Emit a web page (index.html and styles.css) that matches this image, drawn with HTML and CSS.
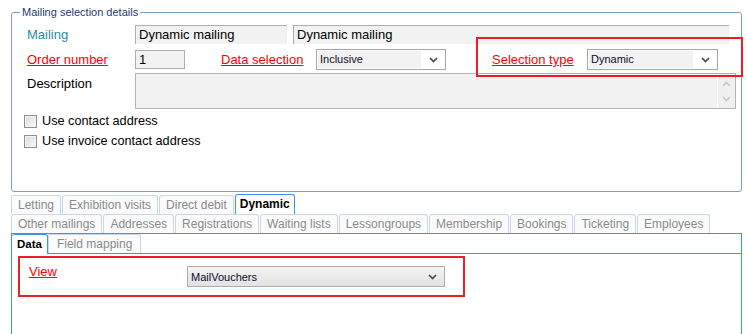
FILE: index.html
```html
<!DOCTYPE html>
<html lang="en">
<head>
    <meta charset="UTF-8">
    <meta name="viewport" content="width=device-width, initial-scale=1.0">
    <title>Mailing selection</title>
    <link rel="stylesheet" href="styles.css">
</head>
<body>
    <div class="page">
        <fieldset class="groupbox">
            <legend>Mailing selection details</legend>
            <div class="row row-mailing">
                <span class="label teal">Mailing</span>
                <div class="field field-name">Dynamic mailing</div>
                <div class="field field-title">Dynamic mailing</div>
            </div>
            <div class="row row-order">
                <a class="label link">Order number</a>
                <div class="field field-order">1</div>
                <a class="label link label-mid">Data selection</a>
                <div class="combo combo-data">
                    <span class="combo-text">Inclusive</span>
                    <svg class="chevron" width="9" height="6" viewBox="0 0 9 6"><path d="M1 1 L4.5 4.5 L8 1" fill="none" stroke="#4a4a4a" stroke-width="1.7"/></svg>
                </div>
                <a class="label link label-type">Selection type</a>
                <div class="combo combo-type">
                    <span class="combo-text">Dynamic</span>
                    <svg class="chevron" width="9" height="6" viewBox="0 0 9 6"><path d="M1 1 L4.5 4.5 L8 1" fill="none" stroke="#4a4a4a" stroke-width="1.7"/></svg>
                </div>
            </div>
            <div class="row row-desc">
                <span class="label label-top">Description</span>
                <div class="memo">
                    <div class="memo-text"></div>
                    <div class="memo-scroll">
                        <svg width="9" height="6" viewBox="0 0 9 6"><path d="M1 5 L4.5 1.5 L8 5" fill="none" stroke="#c8c8c8" stroke-width="1.6"/></svg>
                        <svg width="9" height="6" viewBox="0 0 9 6"><path d="M1 1 L4.5 4.5 L8 1" fill="none" stroke="#c8c8c8" stroke-width="1.6"/></svg>
                    </div>
                </div>
            </div>
            <div class="check-row"><span class="checkbox"></span>Use contact address</div>
            <div class="check-row"><span class="checkbox"></span>Use invoice contact address</div>
        </fieldset>

        <div class="tabs">
            <div class="tab-row">
                <span class="tab">Letting</span>
                <span class="tab">Exhibition visits</span>
                <span class="tab">Direct debit</span>
                <span class="tab active">Dynamic</span>
            </div>
            <div class="tab-row">
                <span class="tab">Other mailings</span>
                <span class="tab">Addresses</span>
                <span class="tab">Registrations</span>
                <span class="tab">Waiting lists</span>
                <span class="tab">Lessongroups</span>
                <span class="tab">Membership</span>
                <span class="tab">Bookings</span>
                <span class="tab">Ticketing</span>
                <span class="tab">Employees</span>
            </div>
            <div class="panel">
                <div class="subtabs">
                    <span class="subtab active">Data</span>
                    <span class="subtab">Field mapping</span>
                </div>
                <div class="subpanel">
                    <div class="view-box">
                        <a class="link view-label">View</a>
                        <div class="view-combo">
                            <span>MailVouchers</span>
                            <svg class="chevron" width="9" height="6" viewBox="0 0 9 6"><path d="M1 1 L4.5 4.5 L8 1" fill="none" stroke="#4a4a4a" stroke-width="1.7"/></svg>
                        </div>
                    </div>
                </div>
            </div>
        </div>

        <div class="highlight"></div>
    </div>
</body>
</html>
```

FILE: styles.css
```css
body {
    margin: 0;
    padding: 0;
    background-color: #fff;
    font-family: "Liberation Sans", Arial, sans-serif;
    font-size: 13px;
    color: #000;
}
.page {
    position: relative;
    width: 747px;
    height: 334px;
    overflow: hidden;
}
.groupbox {
    box-sizing: border-box;
    width: 731px;
    height: 187px;
    margin: 5px 0 0 11px;
    padding: 0;
    border: 1px solid #7a9cd3;
    border-radius: 3px;
}
.groupbox legend {
    margin-left: 8px;
    padding: 0 2px;
    font-size: 11px;
    line-height: 14px;
    color: #1e3a6e;
}
.row {
    display: flex;
    align-items: center;
    padding-left: 15px;
}
.row-mailing {
    margin-top: 6px;
    height: 19px;
}
.row-order {
    margin-top: 5px;
    height: 21px;
}
.row-desc {
    align-items: flex-start;
    margin-top: 3px;
}
.label {
    width: 108px;
    flex-shrink: 0;
}
.teal {
    color: #2d8ca5;
}
.link {
    color: #ff0000;
    text-decoration: underline;
    cursor: pointer;
}
.label-mid {
    width: 95px;
    margin-left: 36px;
}
.label-type {
    width: 95px;
    margin-left: 46px;
}
.label-top {
    padding-top: 3px;
}
.field {
    box-sizing: border-box;
    height: 19px;
    line-height: 18px;
    padding-left: 3px;
    background-color: #f2f2f2;
    border-top: 1px solid #adadad;
    border-left: 1px solid #adadad;
}
.field-name {
    width: 152px;
}
.field-title {
    width: 436px;
    margin-left: 6px;
}
.field-order {
    width: 50px;
    border: 1px solid #adadad;
}
.combo {
    box-sizing: border-box;
    display: flex;
    align-items: center;
    height: 21px;
    border: 1px solid #a5a5a5;
    background-color: #fff;
    padding: 1px;
}
.combo-text {
    flex: 1;
    height: 100%;
    line-height: 17px;
    padding-left: 2px;
    background-color: #f2f2f2;
    font-size: 11px;
    color: #0a0a2a;
}
.combo .chevron {
    margin: 0 6px 0 8px;
}
.combo-data {
    width: 130px;
}
.combo-type {
    width: 131px;
}
.memo {
    box-sizing: border-box;
    display: flex;
    width: 601px;
    height: 36px;
    border: 1px solid #b4b4b4;
    background-color: #f2f2f2;
}
.memo-text {
    flex: 1;
}
.memo-scroll {
    width: 17px;
    display: flex;
    flex-direction: column;
    align-items: center;
    justify-content: space-around;
    padding: 2px 0;
    border-left: 1px solid #fff;
    background-color: #f0f0f0;
}
.check-row {
    display: flex;
    align-items: center;
    height: 20px;
    padding-left: 12px;
    font-size: 12.7px;
}
.groupbox .row-desc + .check-row {
    margin-top: 2px;
}
.checkbox {
    box-sizing: border-box;
    width: 13px;
    height: 13px;
    margin-right: 5px;
    border: 1px solid #8f8f8f;
    background: linear-gradient(135deg, #dcdcdc, #f8f8f8);
    box-shadow: inset 0 0 0 1px #f4f4f4;
}
.tabs {
    width: 731px;
    margin: 3px 0 0 11px;
}
.tab-row {
    display: flex;
    align-items: flex-end;
    height: 19px;
}
.tab {
    box-sizing: border-box;
    height: 19px;
    line-height: 18px;
    padding: 0 6px;
    font-size: 12px;
    color: #8a8a8a;
    background-color: #fbfbfb;
    border: 1px solid #c4d8ee;
    border-bottom: none;
    border-radius: 3px 3px 0 0;
    margin-right: 1px;
}
.tab.active {
    height: 20px;
    padding: 0 4px;
    color: #000;
    font-weight: bold;
    background-color: #fff;
    border-color: #3d93e6;
}
.panel {
    height: 101px;
    border: 1px solid #3d93e6;
    border-bottom: none;
}
.subtabs {
    display: flex;
    height: 19px;
}
.subtab {
    box-sizing: border-box;
    height: 19px;
    line-height: 18px;
    padding: 0 8px;
    font-size: 12px;
    color: #8a8a8a;
    background-color: #fbfbfb;
    border: 1px solid #c4d8ee;
    border-bottom: none;
    border-radius: 3px 3px 0 0;
}
.subtab.active {
    height: 20px;
    padding: 0 5px;
    font-size: 11.5px;
    color: #000;
    font-weight: bold;
    background-color: #fff;
    border: 1px solid #3d93e6;
    border-left: none;
    border-bottom: none;
    position: relative;
    z-index: 1;
}
.subpanel {
    border-top: 1px solid #3d93e6;
    padding: 2px 0 0 6px;
}
.view-box {
    box-sizing: border-box;
    display: flex;
    align-items: flex-start;
    width: 447px;
    height: 41px;
    border: 2px solid #e8202a;
    padding: 6px 0 0 9px;
}
.view-label {
    width: 158px;
    font-size: 13px;
}
.view-combo {
    box-sizing: border-box;
    display: flex;
    align-items: center;
    justify-content: space-between;
    width: 258px;
    height: 21px;
    margin-top: 2px;
    padding: 0 7px 0 3px;
    border: 1px solid #acacac;
    background: linear-gradient(#f3f3f3, #e2e2e2);
    font-size: 11px;
    color: #0a0a2a;
}
.highlight {
    position: absolute;
    left: 476px;
    top: 37px;
    width: 263px;
    height: 36px;
    border: 2px solid #ed1c24;
}
```
